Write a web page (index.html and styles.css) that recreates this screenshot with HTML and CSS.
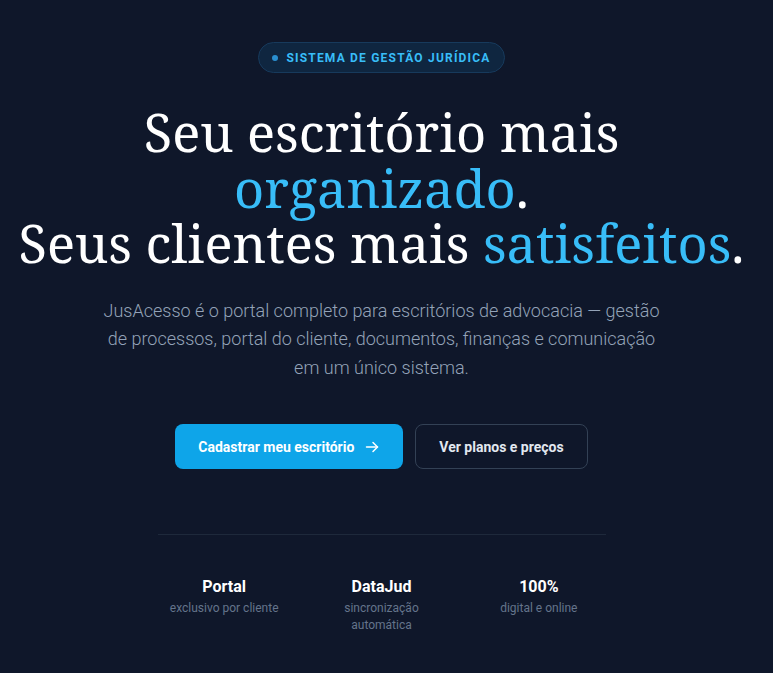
FILE: index.html
```html
<!DOCTYPE html>
<html lang="pt-BR">
<head>
<meta charset="utf-8">
<title>JusAcesso</title>
<link rel="stylesheet" href="styles.css">
</head>
<body>
<main class="hero">
  <div class="badge"><span class="badge-dot"></span>SISTEMA DE GESTÃO JURÍDICA</div>
  <h1 class="title">Seu escritório mais<br><span class="accent">organizado</span>.<br>Seus clientes mais <span class="accent">satisfeitos</span>.</h1>
  <p class="lead">JusAcesso é o portal completo para escritórios de advocacia — gestão de processos, portal do cliente, documentos, finanças e comunicação em um único sistema.</p>
  <div class="actions">
    <a class="btn btn-primary" href="#">Cadastrar meu escritório
      <svg class="btn-icon" viewBox="0 0 16 16" width="16" height="16" fill="none" stroke="currentColor" stroke-width="1.5" stroke-linecap="round" stroke-linejoin="round"><path d="M2.5 8h11"/><path d="M9 3.5 13.5 8 9 12.5"/></svg>
    </a>
    <a class="btn btn-secondary" href="#">Ver planos e preços</a>
  </div>
  <hr class="divider">
  <div class="stats">
    <div class="stat"><div class="stat-title">Portal</div><div class="stat-sub">exclusivo por cliente</div></div>
    <div class="stat"><div class="stat-title">DataJud</div><div class="stat-sub">sincronização automática</div></div>
    <div class="stat"><div class="stat-title">100%</div><div class="stat-sub">digital e online</div></div>
  </div>
</main>
</body>
</html>
```
FILE: styles.css
```css
html, body {
  margin: 0;
  padding: 0;
  background: #0f172a;
}
body {
  font-family: Roboto, "Liberation Sans", Arial, sans-serif;
  color: #f1f5f9;
}
.hero {
  display: flex;
  flex-direction: column;
  align-items: center;
  padding: 42px 10px 0 0;
  text-align: center;
}
.badge {
  display: inline-flex;
  align-items: center;
  gap: 8px;
  box-sizing: border-box;
  height: 31px;
  padding: 0 13px 0 13px;
  border: 1px solid #173a5c;
  border-radius: 999px;
  background: #0f2640;
  color: #38bdf8;
  font-size: 12px;
  font-weight: 700;
  letter-spacing: 1.2px;
}
.badge-dot {
  width: 6px;
  height: 6px;
  border-radius: 50%;
  background: #2a8fd0;
}
.title {
  margin: 31px 0 0;
  font-family: "Noto Serif", Georgia, "Liberation Serif", serif;
  font-weight: 400;
  font-size: 52.4px;
  line-height: 55.5px;
  color: #ffffff;
}
.accent {
  color: #38bdf8;
}
.lead {
  margin: 26px 0 0;
  max-width: 576px;
  font-size: 18px;
  font-weight: 300;
  line-height: 28.9px;
  color: #94a3b8;
}
.actions {
  display: flex;
  gap: 12px;
  margin-top: 41px;
}
.btn {
  display: inline-flex;
  align-items: center;
  gap: 10px;
  box-sizing: border-box;
  height: 45px;
  padding: 0 23px;
  border-radius: 8px;
  font-size: 14px;
  font-weight: 700;
  text-decoration: none;
}
.btn-primary {
  background: #0ea5e9;
  color: #ffffff;
}
.btn-icon {
  display: block;
}
.btn-secondary {
  border: 1px solid #334155;
  color: #e2e8f0;
  background: transparent;
}
.divider {
  width: 448px;
  height: 1px;
  margin: 65px 0 0;
  border: 0;
  background: #1e293b;
}
.stats {
  display: grid;
  grid-template-columns: repeat(3, 1fr);
  gap: 24px;
  width: 448px;
  margin-top: 41px;
}
.stat-title {
  font-size: 16px;
  font-weight: 700;
  line-height: 21px;
  color: #ffffff;
}
.stat-sub {
  margin-top: 3px;
  font-size: 12px;
  line-height: 17px;
  color: #64748b;
}
```
